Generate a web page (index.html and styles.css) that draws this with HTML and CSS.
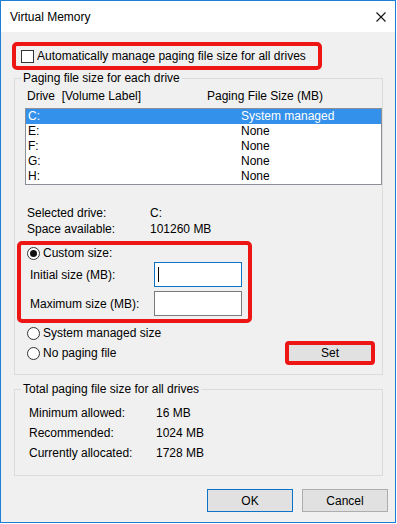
FILE: index.html
```html
<!doctype html>
<html lang="en">
<head>
<meta charset="utf-8">
<meta name="viewport" content="width=device-width,initial-scale=1">
<title>Virtual Memory</title>
<link rel="stylesheet" href="styles.css">
</head>
<body>
<div class="window">
  <div class="titlebar">
    <span class="title">Virtual Memory</span>
    <svg class="close" width="10" height="10" viewBox="0 0 10 10"><path d="M0.5 0.5L9.5 9.5M9.5 0.5L0.5 9.5" stroke="#111" stroke-width="1.1" fill="none"/></svg>
  </div>

  <div class="mark auto">
    <span class="check"></span>
    <span>Automatically manage paging file size for all drives</span>
  </div>

  <fieldset class="group drives">
    <legend>Paging file size for each drive</legend>
    <div class="cols head"><span>Drive&nbsp; [Volume Label]</span><span>Paging File Size (MB)</span></div>
    <div class="listbox">
      <div class="cols row sel"><span>C:</span><span>System managed</span></div>
      <div class="cols row"><span>E:</span><span>None</span></div>
      <div class="cols row"><span>F:</span><span>None</span></div>
      <div class="cols row"><span>G:</span><span>None</span></div>
      <div class="cols row"><span>H:</span><span>None</span></div>
    </div>
    <div class="info">
      <span>Selected drive:</span><span>C:</span>
      <span>Space available:</span><span>101260 MB</span>
    </div>

    <div class="mark custom">
      <div class="opt"><span class="radio on"></span>Custom size:</div>
      <div class="field"><span>Initial size (MB):</span><div class="textbox focus"><span class="caret"></span></div></div>
      <div class="field"><span>Maximum size (MB):</span><div class="textbox"></div></div>
    </div>

    <div class="opt plain"><span class="radio"></span>System managed size</div>
    <div class="setrow">
      <div class="opt"><span class="radio"></span>No paging file</div>
      <div class="mark setmark"><button class="btn set">Set</button></div>
    </div>
  </fieldset>

  <fieldset class="group totals">
    <legend>Total paging file size for all drives</legend>
    <div class="stats">
      <span>Minimum allowed:</span><span>16 MB</span>
      <span>Recommended:</span><span>1024 MB</span>
      <span>Currently allocated:</span><span>1728 MB</span>
    </div>
  </fieldset>

  <div class="buttons">
    <button class="btn ok">OK</button>
    <button class="btn">Cancel</button>
  </div>
</div>
</body>
</html>
```

FILE: styles.css
```css
:root{--bg:#f0f0f0;--blue:#1c7fd6;--red:#ee1515;--line:#dcdcdc;--select:#3391ec}
*{box-sizing:border-box}
body{margin:0;font-family:"Liberation Sans",Arial,sans-serif;font-size:12px;color:#000;background:#fff}
.window{width:396px;height:523px;border:1px solid var(--blue);background:var(--bg)}
.titlebar{height:31px;background:#fff;display:flex;align-items:center;justify-content:space-between;padding:1px 9px 0 9px}
.close{margin-right:0}

.mark{border:4px solid var(--red);border-radius:5px}
.auto{width:310px;height:28px;margin:10px 0 0 11px;display:flex;align-items:center;padding-left:5px;gap:3px}
.check{width:13px;height:13px;border:1px solid #333;background:#fff}

.group{border:1px solid var(--line);margin:1px 12px 0 13px;padding:0;min-width:0}
.group legend{margin-left:6px;padding:0 2px;line-height:15px}
.drives{padding-bottom:9px}
.cols{display:grid;grid-template-columns:180px auto}
.head{line-height:16px;margin-top:2px;padding-left:12px}
.listbox{margin:4px 0 0 10px;border:1px solid #8c8f95;background:#fff;height:77px}
.row{grid-template-columns:213px auto;line-height:15px;padding-left:2px}
.row.sel{background:var(--select);color:#fff}
.info{display:grid;grid-template-columns:123px auto;line-height:16px;margin-top:20px;padding-left:12px}

.custom{width:235px;height:82px;margin:4px 0 0 2px;padding:0 0 0 6px}
.opt{display:flex;align-items:center;gap:3px;line-height:16px}
.radio{width:13px;height:13px;border:1px solid #333;border-radius:50%;background:#fff;display:flex;align-items:center;justify-content:center}
.radio.on::after{content:"";width:7px;height:7px;border-radius:50%;background:#111}
.field{display:grid;grid-template-columns:124px 88px;align-items:center;padding-left:3px;margin-top:1px}
.field+.field{margin-top:4px}
.textbox{height:25px;border:1px solid #7a7a7a;background:#fff;padding:4px 0 0 3px}
.textbox.focus{border-color:#0b74c8}
.caret{display:block;width:1px;height:15px;background:#000}
.plain{margin:2px 0 0 12px}
.setrow{display:flex;justify-content:space-between;align-items:center;height:24px;padding:0 7px 0 12px}
.setmark{width:90px;height:24px;border-radius:4px}
.btn{font:inherit;color:#000;background:#e1e1e1;border:1px solid #adadad;width:86px;height:23px;padding:0}
.set{width:100%;height:100%;border:0}

.totals{margin-top:7px;padding-bottom:12px}
.stats{display:grid;grid-template-columns:127px auto;line-height:20px;margin-top:6px;padding-left:14px}
.buttons{display:flex;justify-content:flex-end;gap:9px;margin:13px 7px 0 0}
.btn.ok{border-color:#0b74c8}
```
